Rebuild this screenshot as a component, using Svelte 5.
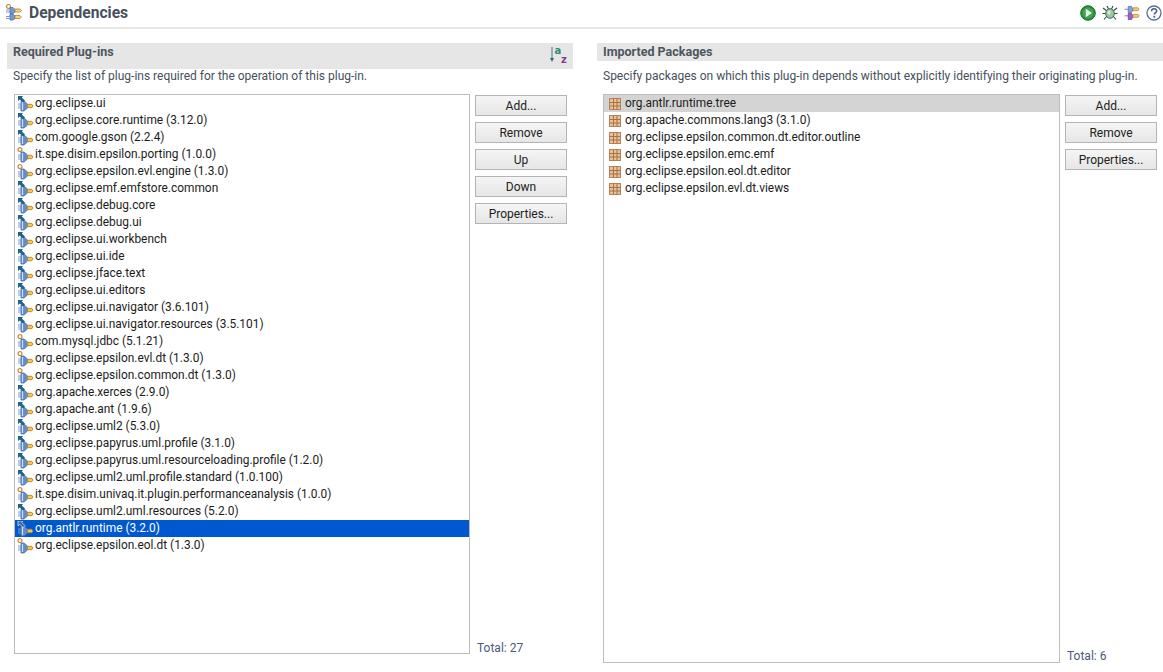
<script>
  const plugins = [
    ["org.eclipse.ui", "arrow"],
    ["org.eclipse.core.runtime (3.12.0)", "arrow"],
    ["com.google.gson (2.2.4)", "arrow"],
    ["it.spe.disim.epsilon.porting (1.0.0)", "ring"],
    ["org.eclipse.epsilon.evl.engine (1.3.0)", "ring"],
    ["org.eclipse.emf.emfstore.common", "arrow"],
    ["org.eclipse.debug.core", "arrow"],
    ["org.eclipse.debug.ui", "arrow"],
    ["org.eclipse.ui.workbench", "arrow"],
    ["org.eclipse.ui.ide", "arrow"],
    ["org.eclipse.jface.text", "arrow"],
    ["org.eclipse.ui.editors", "arrow"],
    ["org.eclipse.ui.navigator (3.6.101)", "arrow"],
    ["org.eclipse.ui.navigator.resources (3.5.101)", "arrow"],
    ["com.mysql.jdbc (5.1.21)", "ring"],
    ["org.eclipse.epsilon.evl.dt (1.3.0)", "ring"],
    ["org.eclipse.epsilon.common.dt (1.3.0)", "ring"],
    ["org.apache.xerces (2.9.0)", "arrow"],
    ["org.apache.ant (1.9.6)", "arrow"],
    ["org.eclipse.uml2 (5.3.0)", "arrow"],
    ["org.eclipse.papyrus.uml.profile (3.1.0)", "arrow"],
    ["org.eclipse.papyrus.uml.resourceloading.profile (1.2.0)", "arrow"],
    ["org.eclipse.uml2.uml.profile.standard (1.0.100)", "arrow"],
    ["it.spe.disim.univaq.it.plugin.performanceanalysis (1.0.0)", "ring"],
    ["org.eclipse.uml2.uml.resources (5.2.0)", "arrow"],
    ["org.antlr.runtime (3.2.0)", "arrow"],
    ["org.eclipse.epsilon.eol.dt (1.3.0)", "ring"]
  ];
  const selectedPlugin = "org.antlr.runtime (3.2.0)";

  const packages = [
    "org.antlr.runtime.tree",
    "org.apache.commons.lang3 (3.1.0)",
    "org.eclipse.epsilon.common.dt.editor.outline",
    "org.eclipse.epsilon.emc.emf",
    "org.eclipse.epsilon.eol.dt.editor",
    "org.eclipse.epsilon.evl.dt.views"
  ];
</script>

{#snippet plug(mark)}
  <svg class="icon" width="17" height="16" viewBox="0 0 17 16">
    <path d="M1 8 H4.5 M1 10 H4.5 M1 12 H4.5" stroke="#7f9ccb" stroke-width="1" />
    <path d="M4 5 H7 L10.5 8 V12 L7 15 H4 Z" fill="#5f8dd2" stroke="#4d70aa" stroke-width="0.8" />
    <path d="M5.5 6 V14" stroke="#cfe0f6" stroke-width="1.2" />
    <path d="M10.5 8.3 H14.8 L16 10 L14.8 11.7 H10.5 Z" fill="#f0c65e" stroke="#b9811f" stroke-width="0.9" />
    {#if mark === "arrow"}
      <path class="mark" d="M1 0 H6 L4.8 1.4 L8 4.6 L6 6.6 L2.8 3.4 L1 5 Z" fill="#1d6488" />
    {:else}
      <circle cx="3" cy="2.6" r="2" fill="#fff" stroke="#c9873a" stroke-width="1.2" />
    {/if}
  </svg>
{/snippet}

{#snippet pkg()}
  <svg class="icon pkg" width="12" height="12" viewBox="0 0 12 12">
    <rect x="0.5" y="0.5" width="11" height="11" fill="#e6c296" stroke="#b5825a" />
    <path d="M4.5 0.5 V11.5 M8 0.5 V11.5 M0.5 4.5 H11.5 M0.5 8 H11.5" stroke="#a9714a" />
  </svg>
{/snippet}

<div class="page">
  <header class="head">
    <svg width="18" height="18" viewBox="0 0 18 18">
      <circle cx="3.5" cy="2.5" r="2" fill="#fff" stroke="#c98a3c" stroke-width="1.2" />
      <path d="M5 3.5 H8 L10 5.5 V8 L8 9.5 H5 Z" fill="#6f9ad6" stroke="#4a6fa8" stroke-width="0.8" />
      <path d="M10 5 H15 L16.5 6.5 L15 8 H10 Z" fill="#f3d27c" stroke="#b9822a" stroke-width="0.8" />
      <path d="M1 6 H5 M1 8 H5" stroke="#7b97c4" />
      <path d="M5 10 H8 L10 12 V14.5 L8 16 H5 Z" fill="#6f9ad6" stroke="#4a6fa8" stroke-width="0.8" />
      <path d="M10 11.5 H15 L16.5 13 L15 14.5 H10 Z" fill="#f3d27c" stroke="#b9822a" stroke-width="0.8" />
      <path d="M1 12.5 H5 M1 14.5 H5" stroke="#7b97c4" />
    </svg>
    <h1>Dependencies</h1>
    <div class="tools">
      <svg width="16" height="16" viewBox="0 0 16 16">
        <circle cx="8" cy="8" r="7.3" fill="#2f8f3e" stroke="#1f6a33" />
        <circle cx="8" cy="8" r="5.4" fill="#3fa64e" />
        <path d="M5.8 3.8 L12 8 L5.8 12.2 Z" fill="#e4f4e4" />
      </svg>
      <svg width="16" height="16" viewBox="0 0 16 16">
        <path d="M1 3 L5 6 M15 3 L11 6 M0.5 8.5 H4 M15.5 8.5 H12 M2 14.5 L5 11 M14 14.5 L11 11 M5 1 L6.5 4 M11 1 L9.5 4" stroke="#2b4a44" stroke-width="1.1" fill="none" />
        <ellipse cx="8" cy="8.5" rx="4.3" ry="4.8" fill="#9cc7a2" stroke="#3d6d5b" />
        <ellipse cx="7" cy="7.5" rx="1.6" ry="2" fill="#d5e8d6" />
      </svg>
      <svg width="16" height="16" viewBox="0 0 17 16">
        <path d="M0.5 4 H5 M0.5 11 H5" stroke="#7b7bc4" />
        <path d="M4.5 1 H8 L9 3 V6 L8 7.5 H4.5 Z" fill="#7fa3e0" stroke="#4a6fa8" stroke-width="0.8" />
        <path d="M9.5 2.5 H15 L16 3.8 L15 5.5 H9.5 Z" fill="#f0cf77" stroke="#b9822a" stroke-width="0.8" />
        <path d="M4.5 8.5 H8 L9 10 V13 L8 15 H4.5 Z" fill="#a05cc8" stroke="#6d3a96" stroke-width="0.8" />
        <path d="M9.5 9.5 H15 L16 10.8 L15 12.5 H9.5 Z" fill="#f0cf77" stroke="#b9822a" stroke-width="0.8" />
      </svg>
      <svg width="16" height="16" viewBox="0 0 16 16">
        <circle cx="8" cy="8" r="7" fill="#fbfcfe" stroke="#5d6f92" stroke-width="1.3" />
        <path d="M5.5 6.2 C5.6 4.5 6.8 3.8 8 3.8 C9.6 3.8 10.6 4.8 10.6 6 C10.6 7.6 8.3 7.8 8.3 9.6" fill="none" stroke="#4a5d82" stroke-width="1.5" />
        <rect x="7.4" y="10.8" width="1.8" height="1.8" fill="#4a5d82" />
      </svg>
    </div>
  </header>

  <main class="columns">
    <section class="col">
      <div class="bar tall">
        <h2>Required Plug-ins</h2>
        <svg class="sort" width="18" height="20" viewBox="0 0 18 20">
          <path d="M2 1 V13" stroke="#3f7a9a" stroke-width="1" />
          <path d="M0 12 H4 L2 16 Z" fill="#2f6484" />
          <text x="4.5" y="8" class="sort-a">a</text>
          <text x="11" y="17" class="sort-z">z</text>
        </svg>
      </div>
      <p class="desc">Specify the list of plug-ins required for the operation of this plug-in.</p>
      <div class="body">
        <ul class="list">
          {#each plugins as [name, mark]}
            <li class:sel={name === selectedPlugin}>
              {@render plug(mark)}
              <span>{name}</span>
            </li>
          {/each}
        </ul>
        <div class="side">
          <button>Add...</button>
          <button>Remove</button>
          <button>Up</button>
          <button>Down</button>
          <button>Properties...</button>
          <div class="total">Total: 27</div>
        </div>
      </div>
    </section>

    <section class="col">
      <div class="bar">
        <h2>Imported Packages</h2>
      </div>
      <p class="desc gap">Specify packages on which this plug-in depends without explicitly identifying their originating plug-in.</p>
      <div class="body long">
        <ul class="list">
          {#each packages as name, i}
            <li class:grey={i === 0}>
              {@render pkg()}
              <span>{name}</span>
            </li>
          {/each}
        </ul>
        <div class="side">
          <button>Add...</button>
          <button>Remove</button>
          <button>Properties...</button>
          <div class="total">Total: 6</div>
        </div>
      </div>
    </section>
  </main>
</div>

<style>
  :global(body) {
    margin: 0;
    background: #fff;
  }
  .page {
    width: 1163px;
    height: 672px;
    overflow: hidden;
    font-family: Roboto, "Liberation Sans", sans-serif;
    font-size: 12px;
    color: #222;
  }
  .head {
    display: flex;
    align-items: center;
    height: 26px;
    padding: 0 1px 1px 5px;
    border-bottom: 2px solid #e6e6e6;
  }
  .head h1 {
    margin: 0 0 0 6px;
    font-size: 15.6px;
    font-weight: 700;
    color: #48505c;
  }
  .tools {
    margin-left: auto;
    display: flex;
    gap: 6px;
  }
  .columns {
    display: flex;
    gap: 24px;
    padding: 14px 0 0 7px;
  }
  .col {
    width: 566px;
    flex: none;
  }
  .bar {
    display: flex;
    justify-content: space-between;
    height: 18px;
    padding: 0 5px 0 6px;
    background: #e6e6e6;
  }
  .bar.tall {
    height: 26px;
  }
  .bar h2 {
    margin: 0;
    font-size: 12.5px;
    line-height: 17px;
    font-weight: 700;
    color: #4d5560;
  }
  .sort {
    margin-top: 3px;
    overflow: visible;
  }
  .sort-a {
    font: 700 10px "DejaVu Sans", sans-serif;
    fill: #2f8a78;
  }
  .sort-z {
    font: 700 10px "DejaVu Sans", sans-serif;
    fill: #8a3a8f;
  }
  .desc {
    margin: 0;
    padding-left: 6px;
    height: 25px;
    line-height: 14px;
    color: #46505c;
  }
  .desc.gap {
    margin-top: 8px;
  }
  .body {
    display: flex;
    height: 560px;
    padding-left: 7px;
    gap: 5px;
  }
  .body.long {
    height: 569px;
    padding-left: 6px;
  }
  .body.long .total {
    margin-bottom: 0;
  }
  .list {
    list-style: none;
    margin: 0;
    padding: 0;
    width: 454px;
    border: 1px solid #bdbdbd;
    flex: none;
  }
  .body.long .list {
    width: 455px;
  }
  .list li {
    display: flex;
    align-items: center;
    box-sizing: border-box;
    height: 17px;
    padding-left: 2px;
    color: #1c1c1c;
    font-size: 11.9px;
    white-space: nowrap;
  }
  .list li span {
    margin: 0 0 2px 1px;
  }
  .icon {
    flex: none;
  }
  .icon.pkg {
    margin: 0 3px;
  }
  .list li.sel {
    background: #0058d0;
    color: #fff;
  }
  .sel .mark {
    fill: #3a6a98;
    stroke: #e8eef6;
    stroke-width: 0.7;
  }
  .list li.grey {
    background: #d4d4d4;
  }
  .side {
    display: flex;
    flex-direction: column;
    width: 92px;
    padding-top: 1px;
    gap: 6px;
  }
  button {
    height: 21px;
    padding: 0;
    font: inherit;
    color: #222;
    background: linear-gradient(#f5f5f5, #e6e6e6);
    border: 1px solid #b4b4b4;
  }
  .total {
    margin-top: auto;
    margin-bottom: -1px;
    padding-left: 2px;
    line-height: 14px;
    color: #4a5a78;
  }
</style>
